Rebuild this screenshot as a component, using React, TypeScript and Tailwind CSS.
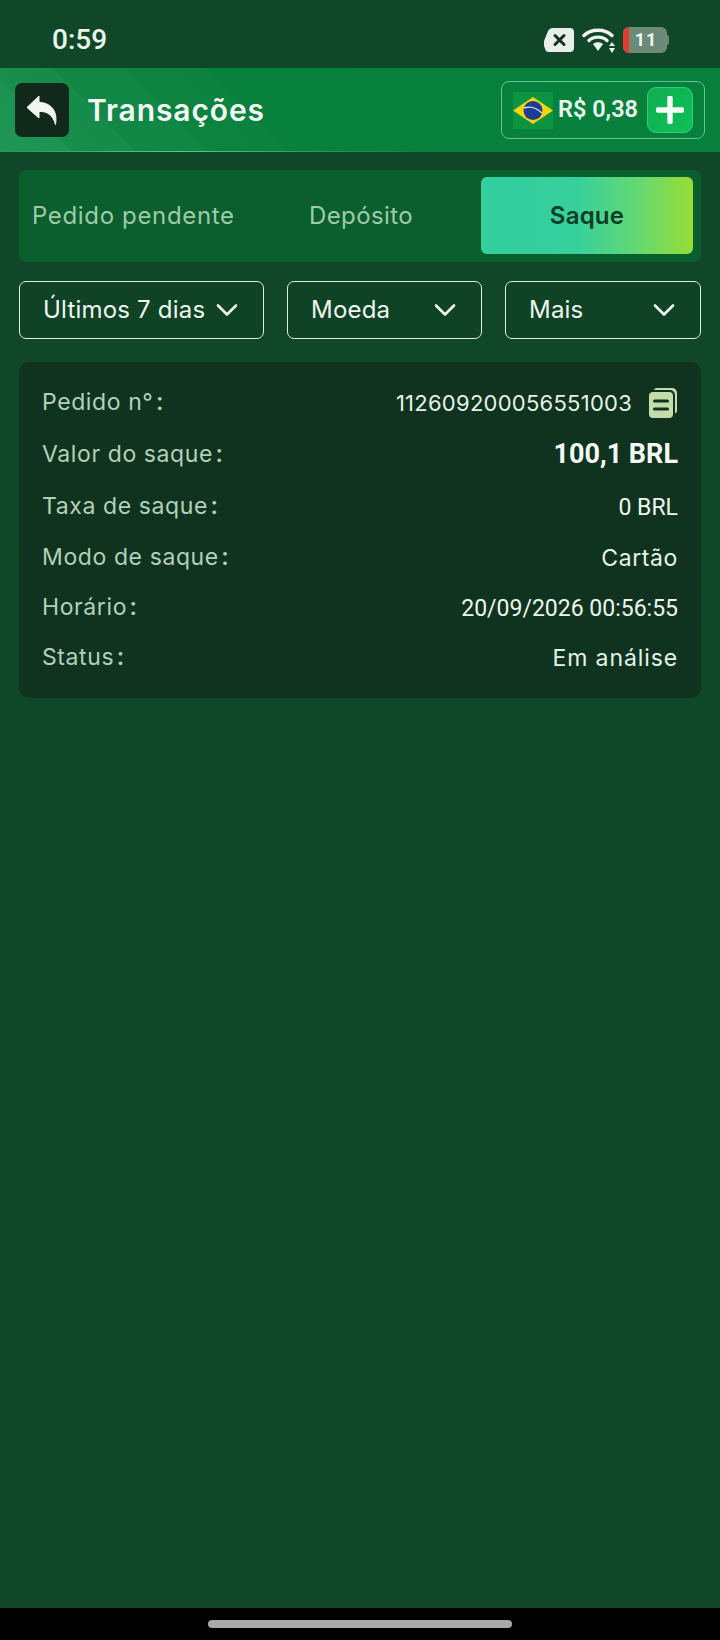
import React from "react";

const F = "[font-family:Inter,'Noto_Sans',sans-serif]";

function Chevron() {
  return (
    <svg width="22" height="14" viewBox="0 0 22 14" fill="none" className="shrink-0">
      <path d="M2 2.5 L11 11.5 L20 2.5" stroke="#eef6ef" strokeWidth="2.6" strokeLinecap="round" strokeLinejoin="round" />
    </svg>
  );
}

function Select({ label, w, gap }: { label: string; w: string; gap: string }) {
  return (
    <div className={`${w} ${gap} h-[58px] flex items-center border border-[#dfeee2] rounded-[7px] pl-[23px] pr-[25px] justify-between bg-[#104225]`}>
      <span className="text-[24px] tracking-[0.2px] text-[#eef6ef] whitespace-nowrap">{label}</span>
      <Chevron />
    </div>
  );
}

function Row({ label, children, h }: { label: string; children: React.ReactNode; h: string }) {
  return (
    <div className={`flex items-center justify-between ${h}`}>
      <span className="text-[23px] tracking-[0.6px] text-[#b3d0b8] whitespace-nowrap">
        {label}
        <span className="ml-[3px] font-[Roboto] font-bold">:</span>
      </span>
      {children}
    </div>
  );
}

export default function App() {
  return (
    <div className={`w-[720px] h-[1640px] flex flex-col bg-[#104728] ${F} overflow-hidden`}>
      <div className="h-[68px] shrink-0 flex items-center justify-between pl-[52px] pr-[51px] pt-[12px]">
        <span className="text-[28px] font-medium font-[Roboto] text-[#eaf4ec] leading-none">0:59</span>
        <div className="flex items-center gap-[7px]">
          <svg width="32" height="26" viewBox="0 0 32 26">
            <path d="M9 1 H27 a4 4 0 0 1 4 4 V21 a4 4 0 0 1 -4 4 H6 a4 4 0 0 1 -4 -3.5 L1 19 V14 L5 4 a5 5 0 0 1 4 -3z" fill="#e8eeea" />
            <path d="M12 8.5 L21 17.5 M21 8.5 L12 17.5" stroke="#14301f" strokeWidth="3" strokeLinecap="round" />
          </svg>
          <svg width="34" height="26" viewBox="0 0 34 26" fill="none">
            <path d="M2 8.5 C9 1.5 23 1.5 30 8.5" stroke="#eef4ef" strokeWidth="3.4" strokeLinecap="round" />
            <path d="M7 13.5 C11.5 9 20.5 9 25 13.5" stroke="#eef4ef" strokeWidth="3.4" strokeLinecap="round" />
            <path d="M11 17 C14 14.5 18 14.5 21 17 L16 24z" fill="#eef4ef" />
            <path d="M30 15 L33 19 H27z M30 26 L33 21 H27z" fill="#eef4ef" />
          </svg>
          <div className="relative w-[44px] h-[26px] rounded-[6px] bg-[#6b8a79] overflow-hidden flex items-center justify-center">
            <div className="absolute left-0 top-0 bottom-0 w-[6px] bg-[#e53a30]" />
            <span className="text-[18px] font-bold font-[Roboto] tracking-[1px] text-[#f2f6f3] leading-none pl-[2px]">11</span>
          </div>
          <div className="w-[2px] h-[10px] -ml-[7px] bg-[#6b8a79] rounded-r-[2px]" />
        </div>
      </div>

      <div className="relative h-[84px] shrink-0 flex items-center justify-between pl-[15px] pr-[15px] bg-[linear-gradient(45deg,#1f9655_0%,#1c9352_9%,#178e4c_9%,#168c4a_17%,#118846_17%,#108744_26%,#0c843f_26%,#0b833f_36%,#08813d_36%,#07803d_100%)]">
        <div className="flex items-center gap-[18px]">
          <div className="w-[54px] h-[54px] rounded-[7px] bg-[#10291b] flex items-center justify-center">
            <svg width="32" height="30" viewBox="0 0 32 30">
              <path d="M13 1 L1 12.5 L13 23 V16.5 C21 16 27 20 29.5 29.5 C32 15 24 7.5 13 7.5z" fill="#f3f7f4" stroke="#f3f7f4" strokeWidth="1" strokeLinejoin="round" />
            </svg>
          </div>
          <span className="text-[30px] font-semibold text-[#f3f8f4] tracking-[0.9px] leading-none">Transações</span>
        </div>
        <div className="w-[204px] h-[58px] rounded-[8px] border border-[#62c48f] flex items-center pl-[11px] gap-[5px]">
          <svg width="40" height="37" viewBox="0 0 40 37" className="shrink-0">
            <rect width="40" height="37" fill="#0d9441" />
            <path d="M20 5 L40 18.5 L20 32 L0 18.5z" fill="#f6d50c" />
            <circle cx="20" cy="18.5" r="9.5" fill="#1d3a94" />
            <path d="M11 16 C17 14 24 16 29 21" stroke="#dfe7f5" strokeWidth="1.4" fill="none" />
          </svg>
          <span className="w-[84px] text-[23.5px] font-semibold font-[Roboto] text-[#e9f5ed] whitespace-nowrap leading-none">R$ 0,38</span>
          <div className="w-[46px] h-[46px] rounded-[9px] border border-[#34cf74] bg-[linear-gradient(135deg,#0fae50,#0ec058)] flex items-center justify-center shrink-0">
            <svg width="28" height="28" viewBox="0 0 28 28">
              <path d="M14 2 V26 M2 14 H26" stroke="#f5fbf7" strokeWidth="5.4" strokeLinecap="round" />
            </svg>
          </div>
        </div>
        <div className="absolute left-0 right-0 bottom-0 h-[1px] bg-[linear-gradient(90deg,#1d9a58_0%,#5cc890_25%,#1d9a58_45%,#07803d_60%)]" />
      </div>

      <div className="flex-1 px-[19px] pt-[18px] flex flex-col">
        <div className="h-[92px] rounded-[8px] bg-[#0b5f2f] flex items-center pl-[13px] pr-[8px] pb-[1px]">
          <span className="w-[277px] text-[24px] tracking-[0.65px] text-[#9ecba6] whitespace-nowrap">Pedido pendente</span>
          <span className="w-[172px] text-[24px] tracking-[0.4px] text-[#9ecba6] whitespace-nowrap">Depósito</span>
          <div className="w-[212px] h-[77px] rounded-[6px] bg-[linear-gradient(90deg,#33cf9f_0%,#36d09c_45%,#66d971_75%,#97dd33_100%)] flex items-center justify-center">
            <span className="text-[24px] font-semibold text-[#0f3c27] tracking-[0.2px]">Saque</span>
          </div>
        </div>

        <div className="mt-[19px] flex">
          <Select label="Últimos 7 dias" w="w-[245px]" gap="" />
          <Select label="Moeda" w="w-[195px]" gap="ml-[23px]" />
          <Select label="Mais" w="w-[196px]" gap="ml-[23px]" />
        </div>

        <div className="mt-[23px] h-[336px] rounded-[10px] bg-[#103320] pl-[23px] pr-[23px] pt-[15px]">
          <Row label="Pedido n°" h="h-[51px]">
            <div className="flex items-center gap-[16px]">
              <span className="text-[22px] tracking-[0.25px] text-[#e6f2e8] leading-none">112609200056551003</span>
              <svg width="30" height="31" viewBox="0 0 30 31">
                <path d="M8 1 H24 a5 5 0 0 1 5 5 V24 a3 3 0 0 1 -2 2.6 V8 a5 5 0 0 0 -5 -5 H6 a5 5 0 0 1 2 -2z" fill="#c3dcaa" />
                <rect x="1" y="5" width="24" height="26" rx="4" fill="#c3dcaa" />
                <path d="M6.5 14 H19.5 M6.5 22 H19.5" stroke="#103320" strokeWidth="3" strokeLinecap="round" />
              </svg>
            </div>
          </Row>
          <Row label="Valor do saque" h="h-[53px]">
            <span className="text-[27px] font-bold font-[Roboto] text-[#f4f9f5] leading-none">100,1 BRL</span>
          </Row>
          <Row label="Taxa de saque" h="h-[52px]">
            <span className="text-[23px] font-[Roboto] text-[#ecf5ee] leading-none">0 BRL</span>
          </Row>
          <Row label="Modo de saque" h="h-[50px]">
            <span className="text-[23px] tracking-[0.6px] text-[#e6f2e8] leading-none">Cartão</span>
          </Row>
          <Row label="Horário" h="h-[50px]">
            <span className="text-[23px] font-[Roboto] text-[#ecf5ee] leading-none">20/09/2026 00:56:55</span>
          </Row>
          <Row label="Status" h="h-[50px]">
            <span className="text-[23px] tracking-[0.9px] text-[#e6f2e8] leading-none">Em análise</span>
          </Row>
        </div>
      </div>

      <div className="h-[32px] shrink-0 bg-black flex items-center justify-center">
        <div className="w-[304px] h-[8px] rounded-full bg-[#a8a8a8]" />
      </div>
    </div>
  );
}
